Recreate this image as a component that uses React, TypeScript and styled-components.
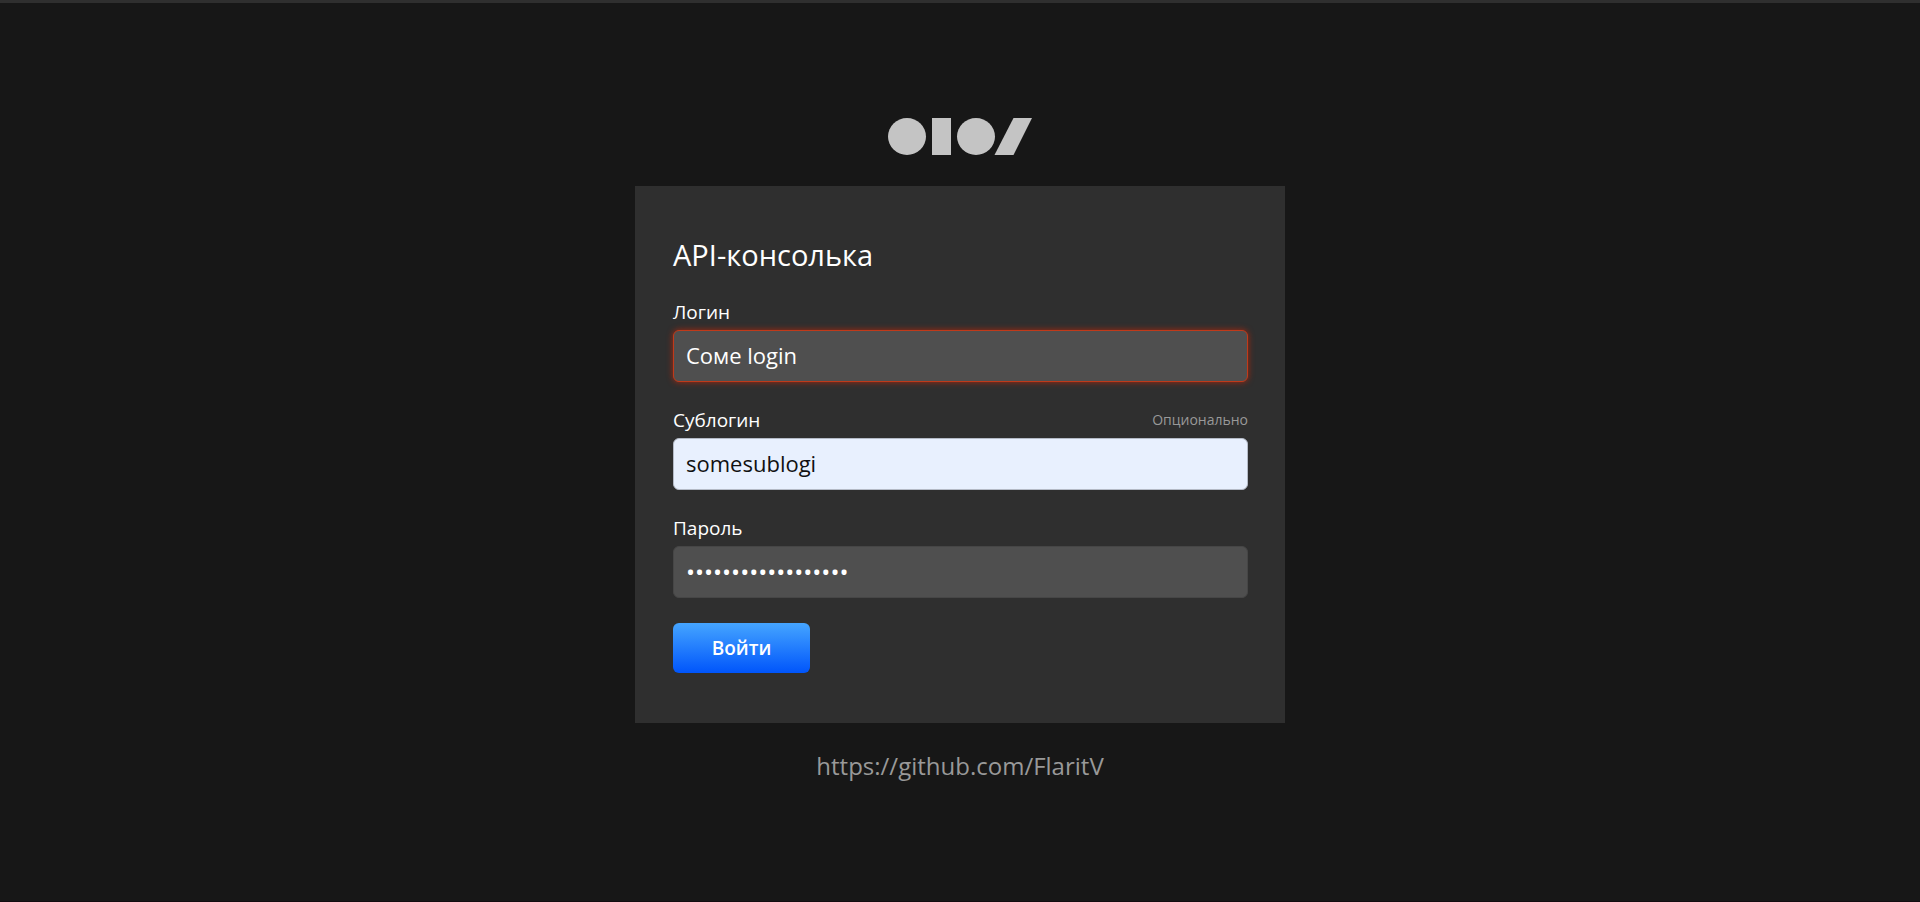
import React, { useState } from "react";
import styled, { createGlobalStyle } from "styled-components";

const GlobalStyle = createGlobalStyle`
  *, *::before, *::after { box-sizing: border-box; }
  body {
    margin: 0;
    background: #171717;
    color: #fff;
    font-family: "Open Sans", "Noto Sans", sans-serif;
  }
`;

const Page = styled.main`
  min-height: 100vh;
  display: flex;
  flex-direction: column;
  align-items: center;
  justify-content: center;
  padding: 20px 20px 24px;
  border-top: 3px solid #2f2f2f;
  border-bottom: 1px solid #120c10;
`;

const Logo = styled.svg`
  display: block;
  width: 144px;
  height: 37px;
  fill: #c4c4c4;
`;

const Card = styled.form`
  width: 100%;
  max-width: 650px;
  margin: 31px 0 26px;
  padding: 49px 37px 50px 38px;
  background: #2f2f2f;
`;

const Title = styled.h1`
  margin: 0 0 24px;
  font-size: 29px;
  line-height: 40px;
  font-weight: 400;
`;

const Field = styled.div`
  margin-bottom: 25px;
`;

const FieldHeader = styled.div`
  display: flex;
  align-items: center;
  justify-content: space-between;
  height: 26px;
  margin-bottom: 5px;
`;

const Label = styled.label`
  font-size: 19px;
  line-height: 26px;
  font-weight: 500;
`;

const Hint = styled.span`
  font-size: 14px;
  line-height: 26px;
  color: #999;
`;

type Variant = "plain" | "error" | "autofill";

const borders: Record<Variant, string> = {
  plain: "#464646",
  error: "#c03a1a",
  autofill: "#b4bac6",
};

const Input = styled.input<{ $variant: Variant }>`
  display: block;
  width: 100%;
  height: 52px;
  padding: 0 12px 2px;
  border: 1px solid ${(p) => borders[p.$variant]};
  border-radius: 6px;
  outline: none;
  background: ${(p) => (p.$variant === "autofill" ? "#e8f0fe" : "#4f4f4f")};
  color: ${(p) => (p.$variant === "autofill" ? "#111" : "#fff")};
  box-shadow: ${(p) => (p.$variant === "error" ? "0 0 6px #a8280f" : "none")};
  font-family: inherit;
  font-size: 22px;

  &[type="password"] {
    padding-bottom: 0;
    font-size: 24px;
  }
`;

const Submit = styled.button`
  display: block;
  width: 137px;
  height: 50px;
  padding: 1px 0 0;
  border: 0;
  border-radius: 6px;
  background: linear-gradient(#45a5ff, #0055fb);
  color: #fff;
  font-family: inherit;
  font-size: 19px;
  font-weight: 600;
  cursor: pointer;
`;

const RepoLink = styled.a`
  font-size: 24px;
  line-height: 34px;
  color: #999;
  text-decoration: none;
`;

export default function App() {
  const [login, setLogin] = useState("Соме login");
  const [sublogin, setSublogin] = useState("somesublogi");
  const [password, setPassword] = useState("x".repeat(18));

  return (
    <>
      <GlobalStyle />
      <Page>
        <Logo viewBox="0 0 144 37" aria-hidden="true">
          <ellipse cx="19" cy="18.5" rx="19" ry="18.5" />
          <rect x="44" width="19" height="37" />
          <ellipse cx="88" cy="18.5" rx="19" ry="18.5" />
          <path d="M125.500 0H144L125.500 37H106.500Z" />
        </Logo>
        <Card onSubmit={(e) => e.preventDefault()}>
          <Title>API-консолька</Title>
          <Field>
            <FieldHeader>
              <Label htmlFor="login">Логин</Label>
            </FieldHeader>
            <Input
              id="login"
              type="text"
              $variant="error"
              aria-invalid="true"
              value={login}
              onChange={(e) => setLogin(e.target.value)}
            />
          </Field>
          <Field>
            <FieldHeader>
              <Label htmlFor="sublogin">Сублогин</Label>
              <Hint id="sublogin-hint">Опционально</Hint>
            </FieldHeader>
            <Input
              id="sublogin"
              type="text"
              $variant="autofill"
              aria-describedby="sublogin-hint"
              value={sublogin}
              onChange={(e) => setSublogin(e.target.value)}
            />
          </Field>
          <Field>
            <FieldHeader>
              <Label htmlFor="password">Пароль</Label>
            </FieldHeader>
            <Input
              id="password"
              type="password"
              $variant="plain"
              value={password}
              onChange={(e) => setPassword(e.target.value)}
            />
          </Field>
          <Submit type="submit">Войти</Submit>
        </Card>
        <RepoLink href="https://github.com/FlaritV">https://github.com/FlaritV</RepoLink>
      </Page>
    </>
  );
}
